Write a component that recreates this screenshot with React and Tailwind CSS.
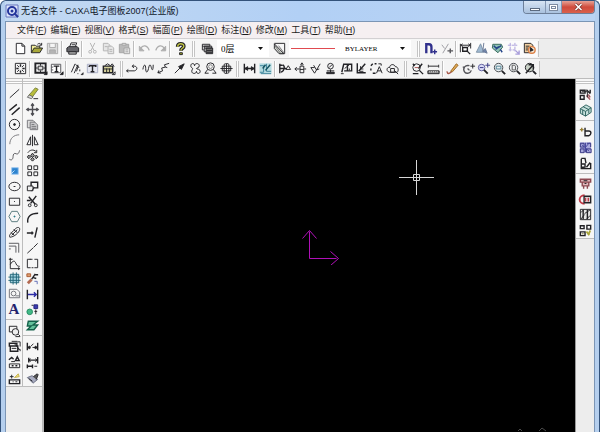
import React from 'react';
import clsx from 'clsx';

const K = '#222226';

// 16x16 glyphs, drawn with a 1px dark stroke unless a shape says otherwise
const GLYPHS = {
  new: <path d="M3.500 2.500h6l3 3v8h-9zM9.500 2.500v3h3" fill="#fff" />,
  open: <><path d="M2.500 12.500v-8h4l1 1h4v2" fill="#f3ee9a" /><path d="M2.500 12.500l3-5h9l-3 5z" fill="#a8a83a" /><path d="M9 3.500c2-1.500 3-1 4 .5M13.500 2v2.500h-2.500" /></>,
  save: <g stroke="#a9a9a9"><path d="M2.500 2.500h11v11h-11z" fill="#dcdcdc" /><path d="M5 3v4h6v-4" fill="#f5f5f5" /><path d="M5 13v-3.500h6v3.500" fill="#b4b4b4" /></g>,
  print: <><path d="M5 6l1.500-4h6l-1.500 4" fill="#fff" /><path d="M2 7.500l2-1.500h9l1.500 1.500v4h-12.500z" fill="#66666b" /><path d="M4 11.500h8v2.500h-8z" fill="#bbb" /><path d="M7 4h4" /></>,
  cut: <g stroke="#b3b3b3"><path d="M5.500 2l4 8M10.500 2l-4 8" /><circle cx="5.500" cy="11.500" r="1.500" /><circle cx="10.500" cy="11.500" r="1.500" /></g>,
  copy: <g stroke="#b3b3b3" fill="#e6e6e6"><path d="M2.500 2.500h5l2 2v6h-7z" /><path d="M7.500 5.500h4l2 2v6h-6z" /><path d="M4 6h3M9 9h3M9 11h3" /></g>,
  paste: <g stroke="#a3a3a3"><path d="M2.500 3.500h10v9h-10z" fill="#b9b9b9" /><path d="M5.500 2.500h4v2h-4z" fill="#ddd" /><path d="M7.500 7.500h6v6h-6z" fill="#e8e8e8" /><path d="M9 9.500h3M9 11.500h3" /></g>,
  undo: <g stroke="#adadad"><path d="M4 8c2-4 7-4 9 2" strokeWidth="1.500" /><path d="M2.500 5.500v5h5z" fill="#adadad" /></g>,
  redo: <g stroke="#adadad"><path d="M12 8c-2-4-7-4-9 2" strokeWidth="1.500" /><path d="M13.500 5.500v5h-5z" fill="#adadad" /></g>,
  help: <><path d="M5 6c0-4 6.500-4 6.500-.5 0 2.500-3 2-3 5" strokeWidth="4" /><path d="M5 6c0-4 6.500-4 6.500-.5 0 2.500-3 2-3 4.500" stroke="#bfc243" strokeWidth="1.500" /><path d="M7 12.500h3v2h-3z" fill="#a5a72c" /></>,
  layers: <><path d="M2.500 3.500h8v6h-8z" fill="#fff" /><path d="M4.500 5.500h8v6h-8z" fill="#ddd" /><path d="M6.500 7.500h7v6h-7z" fill="#777" /><path d="M2.500 5.500h8M4.500 7.500h8M7 10h6M7 12h6" /></>,
  pen: <><path d="M2.500 2.500h11v11h-5" /><path d="M2.500 3v5l5 5.500h5z" fill="#cfd3cd" /><path d="M3 5l6 8M7 5l6 8" stroke="#777" /></>,
  magnet: <><path d="M3.500 13v-9.500h3c2 0 2.500 1 2.500 3v6.500" stroke="#30308c" strokeWidth="2.500" /><path d="M10 11.500h5M12.500 9v5" stroke="#30308c" strokeWidth="1.500" /></>,
  snap: <g stroke="#9b9ba0"><path d="M3 4l3 4M10 3l-6 10" /><path d="M9 10.500h6M12 8v5" stroke="#55555a" strokeWidth="1.500" /></g>,
  measureFlag: <><path d="M2.500 3v9M13.500 2v6M3 4.500h10M5 3l-2 1.500 2 1.500M11 3l2 1.500-2 1.500" /><path d="M5 7h5v4h-5zM9 10l4 4" strokeWidth="1.500" /></>,
  tri: <><path d="M7 3l-4.500 9h8z" fill="#9fb9d1" stroke="#7f93a8" /><path d="M10.500 2l-1 8M9 11l5 2-2-5z" fill="#6f84ac" stroke="#6a7a96" /></>,
  gem: <><path d="M3 3.500h9l1.500 3-5 6-6-5z" fill="#8fc2b5" stroke="#35665a" /><path d="M4 5l3 3 5-3M6 9l3-3M11 9l2 3" stroke="#244489" strokeWidth="1.500" /></>,
  grid: <g stroke="#a99edb"><path d="M2 4.500h10M3 9.500h8M4.500 2v9M9.500 2v9" strokeDasharray="3 1" /><path d="M10 10l4 4M14 10v4h-4" strokeWidth="1.500" /></g>,
  doc: <><path d="M2.500 2.500h7l2 2v8h-9z" fill="#f1cf9f" /><path d="M4 5.500h4M4 7.500h3M4 9.500h3" /><circle cx="10.500" cy="9.500" r="3.500" fill="#f6ead6" stroke="#dd8248" strokeWidth="1.500" /><path d="M9 7v4l3-1.500z" fill={K} /></>,

  page: <><path d="M2.500 2.500h11v11h-11z" /><path d="M8 3.500v2.500M8 10v2.500M3.500 8h2.500M10 8h2.500" strokeWidth="1.500" /><path d="M4.500 4.500l2 2M11.500 4.500l-2 2M4.500 11.500l2-2M11.500 11.500l-2-2" /></>,
  frame: <><path d="M2.500 2.500h11v10h-11z" strokeWidth="2" /><path d="M5.500 5.500h5v4h-5z" fill="#ddd" /><path d="M8 3v2M8 10v2M3 7.500h2M11 7.500h2M12 14.500h3v-3z" fill={K} /></>,
  titleBlock: <><path d="M2.500 3.500h10v9h-10zM2.500 6.500h2M2.500 9.500h2" fill="#fff" stroke="#55555a" /><path d="M5 5.500h6M8 5.500v6M6 11.500h4" strokeWidth="1.500" /><path d="M12 14.500h3v-3z" fill={K} /></>,
  seq: <path d="M2.500 12l4-9M5.500 13l4-9M7 3.500l4 4M10 5l-2 6M11.500 9v2M9 13.500h1M13 14.500h2v-2z" />,
  textBlock: <><path d="M2.500 3.500h11v9h-11z" stroke="#a9adc4" fill="#e3e5ef" /><path d="M4.500 5h7v1.500M4.500 5v1.500M8 5v6M6 11.500h4" strokeWidth="1.500" /></>,
  table: <><path d="M2.500 5.500h10v7h-10z" fill="#d4d09a" strokeWidth="1.500" /><path d="M3 8.500h9M6 8v4M9 8v4M4 5l3-2 3 2 2-2 2 3M12 14.500h3v-3z" /></>,

  polyArc: <path d="M2 10.500h8c4-1 3-5 0-5h-2M9.500 4l-2 1.500 2 2M3.500 9l-2 1.500 2 1.500" />,
  wave: <path d="M2 9c1-6 3-6 3-1s2 5 3 0 2-5 3-1 2 3 2-3" />,
  zigzag: <path d="M2 12.500l5-2M3 10l-1 2.500 3 .5M7 10.500l-1-3 4-1-1-2.500 5-1.500M10 6.500l2 .5" />,
  arrow: <><path d="M3 13l6-6" /><path d="M13 3l-3 6-3-3z" fill={K} /></>,
  gearHole: <path d="M3 5c0-3 4-3 4 0 0-3 5-3 5 0s-3 2-3 3 4 0 4 3-4 3-4 0c0 3-5 3-5 0s2-2 1-3-2-1-2-3z" />,
  lens: <><circle cx="8" cy="6" r="4" /><circle cx="8" cy="6" r="2" stroke="#888" /><path d="M5 9l-3 4h4M11 9l3 4h-4" /></>,
  shaft: <><path d="M5.500 3.500c2-1 4-1 5 0v9c-2 1-4 1-5 0z" /><path d="M1.500 8h13M3.500 5.500h9v5h-9zM8 3v10" /></>,

  dim: <><path d="M2.500 3v10M13.500 3v10M3 8h10" strokeWidth="1.500" /><path d="M3 8l3-2v4zM13 8l-3-2v4z" fill={K} /></>,
  dimCoord: <><path d="M1.500 2.500h13v11h-13z" fill="#b5dbe0" stroke="none" /><path d="M2 5h4v7h-4M9 3v8h5M3 13.500h11" stroke="#388097" /><path d="M5 8l3-4M8 10l5-6" stroke="#14525f" strokeWidth="1.500" /></>,
  datum: <><path d="M3 3v10M3 8h7M6.500 4c2 2 2 6-2 8M3 4.500h3" strokeWidth="1.500" /><path d="M12 5l-2.500 4h5z" /></>,
  rough: <path d="M2 8.500h5M4 6.500l-2 2 2 2M7.500 5.500h4v7h-4zM7.500 9h4M9.500 2v3M8 4l1.500-2 1.500 2M12 8.500h2" />,
  check: <path d="M3 7l4 6 6-10M3 7h4M6 4.500l3 5 3-1" />,
  datumBase: <><circle cx="8" cy="5.500" r="3" /><path d="M6.500 7l3-3M8 9v3M4 10.500h8" /><path d="M4 12h8v1.500h-8z" fill={K} /></>,
  weld: <><path d="M3 12l2-8.500h8.500v7h-8M9 3.500v7" strokeWidth="1.500" /><path d="M6 8l5-4M2 13.500h3M11 8v2" /></>,
  leader: <><path d="M3.500 2.500v10h9M5 11l7-8" strokeWidth="1.500" /><path d="M7 8.500v-3M7 8.500h3M6 11h4" /></>,
  textArc: <><path d="M2 5l2-2M6 3h2M2 8v2M4 13h3" strokeWidth="1.500" /><path d="M8 13l3-7 3 7M9 10.500h4M10 3h3v2" /></>,
  cloudDim: <><path d="M3 11c-2-2 0-5 2-4 0-4 5-4 6-1 3 0 4 4 2 6h-8z" /><path d="M6 8h4v4h-4zM10 10l4 4" /></>,

  zoomFind: <><circle cx="7" cy="7" r="4" /><path d="M10 10l4 4M3 13.500h6M13 3l-4 5M3 3l2 2" strokeWidth="1.500" /><path d="M5 7h4" stroke="#a55" /></>,
  ruler: <><path d="M2.500 4v3M13.500 4v3M3 5.500h10" /><path d="M2 10.500h12v3h-12z" fill="#888" /><path d="M4 11v1M6 11v1M8 11v1M10 11v1M12 11v1" stroke="#fff" /></>,
  pencil: <><path d="M2 11c1 4 3 2 5 .5" stroke="#a8584a" strokeWidth="1.500" /><path d="M6 11l6-8 2 1.500-6 7z" fill="#dda955" stroke="#9c6726" /></>,
  pan: <><path d="M4 12c-3-5 1-8 5-7M4 8l-2-2M4 12c2 2 6 1 7-2M7 8l2 2" stroke="#55555a" strokeWidth="1.500" /><path d="M10 5.500h5M12.500 3v5" /></>,
  zoomDyn: <><circle cx="6" cy="7" r="3.500" fill="#d9daf6" stroke="#5b5b9c" /><path d="M8.500 9.500l4 4" strokeWidth="2" /><path d="M10 4.500h5M12.500 2v5M4 7h4" stroke="#353582" /></>,
  zoomWin: <><circle cx="7" cy="7" r="4.500" fill="#e8eef1" stroke="#44484c" /><path d="M4.500 5.500h5v3h-5z" stroke="#4f8191" /><path d="M10.500 10.500l3.500 3.500" strokeWidth="2" /></>,
  zoomAll: <><circle cx="7" cy="7" r="4.500" fill="#eef0f2" stroke="#44484c" /><path d="M5.500 4.500h2.500l1 1v4h-3.500z" stroke="#555" /><path d="M10.500 10.500l3.500 3.500" strokeWidth="2" /></>,
  zoomBack: <><circle cx="7" cy="7" r="4.500" fill="#c9d2c7" /><path d="M3 13l8-9M6 4h5v5" strokeWidth="1.500" /><path d="M10.500 10.500l3.500 3.500" strokeWidth="2" /></>,

  line: <path d="M3 12.500l10-9" />,
  parallel: <path d="M2.500 9l8-6.500M5 13.500l8.500-7.500" strokeWidth="1.500" />,
  circle: <><circle cx="8" cy="8" r="5.500" /><circle cx="8" cy="8" r="1" fill={K} /></>,
  arc: <path d="M3 13c0-6 4-10 10-10" stroke="#77777c" />,
  spline: <path d="M2.500 12c3 2 4-1 4-3s1-4 3-3 3 0 4-3.500" stroke="#55555a" />,
  point: <><path d="M5 5h7v7h-7z" fill="#2c83cf" stroke="#9cc8ef" /><path d="M4 12l4-4" stroke="#c7e2fa" /></>,
  ellipse: <><ellipse cx="8" cy="8" rx="6" ry="4.500" /><path d="M7 8h2" /></>,
  rect: <><path d="M2.500 4.500h11v7.500h-11z" /><path d="M7.500 8h1" /></>,
  polygon: <><path d="M5 2.500h6l3 5.500-3 5.500h-6l-3-5.500z" stroke="#55777b" /><path d="M7 8h2M8 7v2" stroke="#2b7b88" /></>,
  slot: <><path d="M3 13c-1-2 0-3 6-9 2-2 5-2 4.500 1s-6 8-10.500 8z" /><path d="M5 11l6-6M4 8l4 3M7 5l4 3" /></>,
  offset: <path d="M2 3.500h10.500v10M2 6.500h7.500v7M2 9.500h2" stroke="#55555a" />,
  formula: <path d="M3.500 2v11.500h10.500M2 3.500h4M3.500 9c3-5 5-4 6-1s3 3 4 3M12.500 12v3" />,
  hatch: <><path d="M3.500 3.500h9v9h-9z" fill="#a3d2df" stroke="#216577" /><path d="M1.500 6.500h13M1.500 10h13M6.500 1.500v13M10 1.500v13" stroke="#216577" /></>,
  region: <g stroke="#707279"><path d="M2.500 3.500h8l3 3v6h-11z" /><circle cx="7" cy="8" r="2.500" /><path d="M9 10.500h4" /></g>,
  blockPick: <><path d="M2.500 3.500h8v6h-8z" /><circle cx="9" cy="9.500" r="3.500" fill="#eee" /><path d="M12 12l2 2M9 14.500h5" /></>,
  libTake: <><path d="M2.500 4.500h8v3h-8zM3.500 7.500h8v5.500h-8z" strokeWidth="1.500" /><path d="M11 3h3v5M12 11h2v2M5 2.500h6M5 10h5M8 5l5 6" /></>,
  libUp: <><path d="M2.500 9.500h11v4h-11zM4.500 7h4" /><path d="M2 5l3-2.500 2 2M11 2l-2 4h4zM5 11.500h2M9 11.500h2" strokeWidth="1.500" /></>,
  libOut: <><path d="M2.500 9.500h11v4h-11z" strokeWidth="1.500" /><path d="M3 6h4M5 4v4M6 11.500h1M9 11.500h2" /><path d="M8 7l4-4 1 3z" stroke="#c9b24a" fill="#e9dd84" /></>,

  erase: <><path d="M4 10l7-8 3 1.500-6 8z" fill="#b8bd3c" stroke="#77803a" /><path d="M2.500 12l2-2.500 4 2-1.500 2z" fill="#ddd" stroke="#666" /><path d="M9 13.500h5" /></>,
  move: <path d="M8 2v12M2 8h12M6.500 4L8 2l1.500 2M6.500 12L8 14l1.500-2M4 6.500L2 8l2 1.500M12 6.500L14 8l-2 1.500" stroke="#4c4c52" strokeWidth="1.500" />,
  copyObj: <g stroke="#77777c"><path d="M2.500 3.500h6l2 2v6h-8z" fill="#ddd" /><path d="M5.500 5.500h5l3 3v5h-8z" fill="#c9c9cc" /><path d="M7 8h3M7 10h5M7 12h5" /></g>,
  mirror: <path d="M6 4v8.500h-4zM10 4v8.500h4zM8 2v12" />,
  rotate: <><path d="M3 5c2-3 6-4 9-1M12.500 2v3h-3" /><path d="M8 5.500l2 2.500-2 2-2-2zM4 7.500l2 2-2 2-1.500-2zM12 7.500l2 2-2 2-1.500-2zM8 10l2 2-2 2-2-2z" fill="#999" /></>,
  array: <path d="M3 3h4v4h-4zM9.500 3h4v4h-4zM3 9.500h4v4h-4zM9.500 9.500h4v4h-4z" />,
  scale: <><path d="M6.500 3.500h7v6h-7z" strokeWidth="1.500" /><path d="M2.500 7.500h6v5h-6z" fill="#eee" /><path d="M7 13l3-4" /></>,
  trim: <><path d="M4 3l7 8M12 2l-6 8M2 7h4" strokeWidth="1.500" /><circle cx="5" cy="12" r="1.500" /><circle cx="11.500" cy="12" r="1.500" /></>,
  fillet: <path d="M3 13.500c-1-6 3-10 11-10" strokeWidth="1.500" />,
  extend: <path d="M2 8.500h7M13 2.500l-2.500 11M7.500 7v3" strokeWidth="1.500" />,
  break: <path d="M2.500 13l6-5.500M9 7l4.500-4.500" />,
  stretch: <path d="M6 3.500h-3.500v9h3.500M10 3.500h3.500v9h-3.500M7 12.500h2M5 3.500h3" />,
  explode: <><path d="M2 3h4v3h-4z" fill="#e0a070" stroke="#a85a32" /><path d="M7 9l4-6M10 4h4M9 7l3 1" strokeWidth="1.500" /><path d="M3 13l4-4" stroke="#b36a52" strokeWidth="3" /><path d="M10 11h3v3" stroke="#5f6bb5" /></>,
  edit: <><path d="M2.500 3v10M13.500 3v10" strokeWidth="1.500" /><path d="M3 8h9M9.500 5.500L12 8l-2.500 2.500" stroke="#2e2ea6" strokeWidth="1.500" /></>,
  brush: <><circle cx="5" cy="10.500" r="3" fill="#42b987" stroke="#258d62" /><path d="M9.500 3h4v4h-4z" fill="#3b3bb0" stroke="#23237c" /><path d="M7 3.500h2M10 10h3M11.500 8v5" /></>,
  props: <path d="M3.500 3.500h10l-5 4h5l-4 5h-7l4-4h-4z" fill="#63c29c" stroke="#14614a" strokeWidth="1.500" />,
  dimEdit: <><path d="M2.500 4v8M13.500 4v8M3 9h3M10 9h3" strokeWidth="1.500" /><path d="M3 9l2-1.500v3zM13 9l-2-1.500v3zM6 8l3-3M8 9h3" fill={K} /></>,
  dimDrive: <><path d="M4 3v5M13.500 2v7M4 5.500h9M2.500 10v4M8 10v4M2.500 12h5" strokeWidth="1.500" /><path d="M6 4l-2 1.500 2 1.500M11 4l2 1.500-2 1.500M10 12h3" /></>,
  format: <><path d="M2.500 7l5-2 6 4-5 4z" fill="#a9adc2" stroke="#6b6f82" /><path d="M9 6l4-3 1 1-2 5" fill="#555" /><path d="M4 8l4 3" /></>,

  libGet: <><path d="M2.500 3.500h5v3h-5zM9 3l4 4M13 3v4M2.500 9h4v4h-4z" strokeWidth="1.500" /><path d="M9 9l4 4.500M11 8l2 3" stroke="#a55a62" strokeWidth="1.500" /><path d="M4 5h6v6" /></>,
  cube: <><path d="M2.500 6l6-4 5.500 3v5l-6 4-5.500-3z" fill="#c6e0dc" stroke="#2c615e" /><path d="M2.500 6l5.500 3 6-4M8 9v5M5 7.500v5M5.500 4l6 3v4" stroke="#2c615e" /></>,
  swap: <><path d="M2 6h4M4 4v4" stroke="#977f35" strokeWidth="1.500" /><path d="M7.500 4v8.500h4c3-1 3-5 0-5h-4" strokeWidth="1.500" /></>,
  param: <><path d="M2 2.500h12v11h-12z" fill="#a9a9dd" stroke="none" /><path d="M2.500 3.500h4v4h-4zM9.500 3.500h4v4M2.500 9.500h4v4h-4zM9 9.500h5v4h-5z" stroke="#32327f" /><path d="M4 5l8 7M12 3l-5 6M8 3v10" stroke="#44449c" /></>,
  plot: <path d="M3.500 2.500h4l1 5M3.500 3v10.500h10v-6M3.500 8.500h4v4M9 12l4-5M4 12h3" strokeWidth="1.500" />,
  stamp: <><path d="M2.500 3.500h11v3h-11zM4.500 6.500h7v4h-7zM6 10.500v3M10 10.500v3" stroke="#8d4a52" strokeWidth="1.500" fill="#e0b9bc" /><path d="M6 5h4M7 8h2" /></>,
  video: <><path d="M7 3.500c-7 0-7 9 0 9" stroke="#c23b48" strokeWidth="2" /><path d="M6.500 4.500h7v7h-7z" fill="#ddd" strokeWidth="1.500" /><path d="M8 6v4M11 6v4" stroke="#c23b48" strokeWidth="1.500" /></>,
  struct: <><path d="M2.500 2.500h11v11h-11z" fill="#e6e6e6" /><path d="M5.500 3v10M10 3v10" strokeWidth="1.500" /><path d="M3 6l3-3M7 7l6-4M3 13l4-5M9 13l4-4" /></>,
  libSet: <><path d="M2.500 3h4v3h-4zM9.500 2.500h4v4h-4zM2.500 9.500h5v4h-5z" strokeWidth="1.500" /><path d="M9 9l3 4M13 8l-2 5" stroke="#a9a63a" strokeWidth="2" /><path d="M4 11.500h2" stroke="#77732c" /></>,
};

const Glyph = ({ name }) => (
  <svg viewBox="0 0 16 16" className="size-[15px] shrink-0" fill="none" stroke={K} aria-hidden="true">
    {GLYPHS[name]}
  </svg>
);

const Tool = ({ name }) => (
  <button type="button" aria-label={name} className="flex min-h-0 min-w-0 flex-1 items-center justify-center">
    {name === 'text'
      ? <span className="font-['Liberation_Serif',serif] text-[15px] leading-none font-bold text-[#23236e]">A</span>
      : <Glyph name={name} />}
  </button>
);

const Group = ({ items, vertical, className }) => (
  <div className={clsx('flex shrink-0', vertical ? 'w-full flex-col' : 'h-4', className)}>
    {items.map((name) => <Tool key={name} name={name} />)}
  </div>
);

const Sep = () => <div className="mx-px h-4 w-0.5 shrink-0 border-l border-[#bdbdbd] bg-white" />;
const HSep = () => <div className="my-0.5 h-px w-full shrink-0 bg-[#bdbdbd]" />;
const Grip = () => <div className="mx-0.5 h-4 w-[3px] shrink-0 border-x border-[#c4c4c4] bg-white" />;
const HGrip = () => <div className="mt-0.5 mb-0.5 h-[3px] w-full shrink-0 border-y border-[#c4c4c4] bg-white" />;

const MENUS = [
  ['文件', 'F'], ['编辑', 'E'], ['视图', 'V'], ['格式', 'S'], ['幅面', 'P'],
  ['绘图', 'D'], ['标注', 'N'], ['修改', 'M'], ['工具', 'T'], ['帮助', 'H'],
];

const TitleBar = () => (
  <header className="flex h-5 items-start bg-linear-to-r from-[#c3d9f2] via-[#b2d0f5] to-[#b9d3f3]">
    <div className="flex h-[19px] flex-1 items-center gap-0.5">
      <svg viewBox="0 0 14 14" className="size-3.5" fill="none" aria-hidden="true">
        <path d="M1 1h12v12H1z" fill="#dfe6fb" stroke="#6474bd" />
        <circle cx="7" cy="7" r="4" stroke="#25369c" strokeWidth="2" />
        <circle cx="7" cy="7" r="1.500" fill="#25369c" />
        <path d="M9 9l4 4" stroke="#25369c" strokeWidth="2" />
      </svg>
      <h1 className="text-[9px] leading-3 whitespace-nowrap text-[#10182a]">无名文件 - CAXA电子图板2007(企业版)</h1>
    </div>
    <div className="flex h-[13px] overflow-hidden rounded-b border border-t-0 border-[#6d7f99]">
      <button type="button" aria-label="最小化" className="flex w-[22px] items-center justify-center border-r border-[#8497b3] bg-linear-to-b from-[#d8e5f4] to-[#a9c1de]">
        <span className="mt-1 h-[3px] w-2.5 border border-[#5c6b80] bg-white" />
      </button>
      <button type="button" aria-label="最大化" className="flex w-4 items-center justify-center border-r border-[#8497b3] bg-linear-to-b from-[#d8e5f4] to-[#a9c1de]">
        <span className="flex h-[7px] w-[9px] items-center justify-center border border-[#7c8aa0] bg-white">
          <span className="h-[3px] w-[5px] border border-[#7c8aa0]" />
        </span>
      </button>
      <button type="button" aria-label="关闭" className="flex w-8 items-center justify-center bg-linear-to-b from-[#e5a196] via-[#cf4a3c] to-[#d9604c]">
        <svg viewBox="0 0 9 8" className="h-2 w-[9px]" fill="none" aria-hidden="true">
          <path d="M1.500 1l6 6M7.500 1l-6 6" stroke="#7d3a35" strokeWidth="3" />
          <path d="M1.500 1l6 6M7.500 1l-6 6" stroke="#fff" strokeWidth="1.500" />
        </svg>
      </button>
    </div>
  </header>
);

const MenuBar = () => (
  <nav className="flex h-[17px] items-center gap-1 border-b border-[#d2d0d2] bg-[#f5eff1] pl-[11px]">
    {MENUS.map(([label, key]) => (
      <button key={key} type="button" className="text-[9px] leading-3 whitespace-nowrap text-[#1c1c1c]">
        {label}(<span className="underline">{key}</span>)
      </button>
    ))}
  </nav>
);

const Caret = () => (
  <svg viewBox="0 0 5 3" className="pointer-events-none absolute top-[7px] right-1.5 h-[3px] w-[5px]" aria-hidden="true">
    <path d="M0 0h5L2.500 3z" fill="#111" />
  </svg>
);

const StandardBar = () => (
  <div className="flex h-5 items-center border-b border-[#cfcfcf] bg-[#ededed]">
    <div className="flex h-full items-center bg-[#f6f6f6]">
      <div className="w-1.5" />
      <Group items={['new', 'open', 'save']} className="w-12" />
      <Sep />
      <Group items={['print']} className="w-4" />
      <Sep />
      <Group items={['cut', 'copy', 'paste']} className="w-12" />
      <Sep />
      <Group items={['undo', 'redo']} className="w-8" />
      <Sep />
      <Group items={['help']} className="w-4" />
      <div className="w-0.5" />
      <Grip />
      <Group items={['layers']} className="w-5" />
      <div className="relative w-[52px] bg-white">
        <select aria-label="图层" className="block h-[17px] w-full appearance-none pl-1 font-['Liberation_Serif','Noto_Sans_CJK_SC',serif] text-[9px] leading-4 text-black">
          <option>0层</option>
        </select>
        <Caret />
      </div>
      <Group items={['pen']} className="w-5" />
      <div className="relative w-[122px] bg-white">
        <select aria-label="线型" className="block h-[17px] w-full appearance-none pl-14 font-['Liberation_Serif',serif] text-[7px] leading-4 text-black">
          <option>BYLAYER</option>
        </select>
        <span className="pointer-events-none absolute top-2 left-0.5 h-px w-11 bg-[#e04a50]" />
        <Caret />
      </div>
      <div className="w-1" />
      <Grip />
      <Group items={['magnet', 'snap']} className="w-8" />
      <Sep />
      <Group items={['measureFlag', 'tri', 'gem', 'grid', 'doc']} className="w-[79px] bg-[#fbfbfb]" />
      <div className="h-4 w-0.5 border-r border-[#c4c4c4]" />
    </div>
  </div>
);

const DrawBar = () => (
  <div className="flex h-5 items-center border-b border-[#bcbcbc] bg-[#ededed]">
    <div className="flex h-full items-center bg-[#f4f4f4]">
      <div className="w-1.5" />
      <Group items={['page']} className="w-4" />
      <Sep />
      <Group items={['frame', 'titleBlock']} className="w-8" />
      <Sep />
      <Group items={['seq', 'textBlock', 'table']} className="w-12" />
      <div className="w-0.5" />
      <Grip />
      <Group items={['polyArc', 'wave', 'zigzag', 'arrow', 'gearHole', 'lens', 'shaft']} className="w-[109px]" />
      <Grip />
      <Group items={['dim', 'dimCoord']} className="w-8" />
      <Sep />
      <Group items={['datum', 'rough', 'check', 'datumBase', 'weld', 'leader', 'textArc', 'cloudDim']} className="w-[123px]" />
      <div className="w-0.5" />
      <Grip />
      <Group items={['zoomFind', 'ruler']} className="w-8" />
      <Sep />
      <Group items={['pencil', 'pan', 'zoomDyn', 'zoomWin', 'zoomAll', 'zoomBack']} className="w-[93px]" />
      <div className="h-4 w-0.5 border-r border-[#c4c4c4]" />
    </div>
  </div>
);

const LeftTools = () => (
  <aside className="flex shrink-0 items-start border-r-2 border-[#b9b9b9] bg-[#ededed]">
    <div className="flex w-[17px] flex-col items-center border-r border-b border-[#bdbdbd] bg-[#f6f6f6]">
      <HGrip />
      <Group
        vertical
        className="h-[231px]"
        items={['line', 'parallel', 'circle', 'arc', 'spline', 'point', 'ellipse', 'rect', 'polygon', 'slot', 'offset', 'formula', 'hatch', 'region', 'text']}
      />
      <HSep />
      <Group vertical className="h-[64px]" items={['blockPick', 'libTake', 'libUp', 'libOut']} />
    </div>
    <div className="flex w-[19px] flex-col items-center border-b border-[#bdbdbd] bg-[#f6f6f6]">
      <HGrip />
      <Group
        vertical
        className="h-[247px]"
        items={['erase', 'move', 'copyObj', 'mirror', 'rotate', 'array', 'scale', 'trim', 'fillet', 'extend', 'break', 'stretch', 'explode', 'edit', 'brush', 'props']}
      />
      <HSep />
      <Group vertical className="h-12" items={['dimEdit', 'dimDrive', 'format']} />
    </div>
  </aside>
);

const RightTools = () => (
  <aside className="w-[19px] shrink-0 border-l border-[#9a9a9a] bg-[#ededed]">
    <div className="flex flex-col items-center border-b border-[#bdbdbd] bg-[#f6f6f6]">
      <HGrip />
      <Group vertical className="h-8" items={['libGet', 'cube']} />
      <HSep />
      <Group vertical className="h-12" items={['swap', 'param', 'plot']} />
      <HSep />
      <Group vertical className="h-[62px]" items={['stamp', 'video', 'struct', 'libSet']} />
    </div>
  </aside>
);

const DrawingArea = () => (
  <main className="relative flex-1 overflow-hidden bg-black">
    {/* origin axes */}
    <svg viewBox="0 0 40 40" className="absolute top-[146px] left-[256px] size-10" fill="none" stroke="#b010b8" aria-hidden="true">
      <path d="M9.500 33.500v-27M2.500 13.500l7-8 7 8M9.500 33.500h27M30.500 26.500l8 7-8 7" />
    </svg>
    {/* crosshair cursor */}
    <svg viewBox="0 0 37 37" className="absolute top-[80px] left-[354px] size-[37px]" fill="none" stroke="#d6d6d6" aria-hidden="true">
      <path d="M18.500 1v35M1 18.500h35M15.500 15.500h6v6h-6z" />
    </svg>
    <svg viewBox="0 0 32 5" className="absolute right-7 bottom-0 h-[5px] w-8" fill="none" stroke="#4a4a4a" aria-hidden="true">
      <path d="M3 4l2-2 2 2M24 4l3-3 4 3" />
    </svg>
  </main>
);

const App = () => (
  <div className="flex min-h-screen flex-col rounded-t-md border-x border-t border-[#33527a] bg-[#b5cfee] px-1 font-['Liberation_Sans','Noto_Sans_CJK_SC',sans-serif]">
    <TitleBar />
    <div className="flex flex-1 flex-col border-x border-t border-[#7b95b5] bg-[#ededed]">
      <MenuBar />
      <StandardBar />
      <DrawBar />
      <div className="flex flex-1">
        <LeftTools />
        <DrawingArea />
        <RightTools />
      </div>
    </div>
  </div>
);

export default App;
